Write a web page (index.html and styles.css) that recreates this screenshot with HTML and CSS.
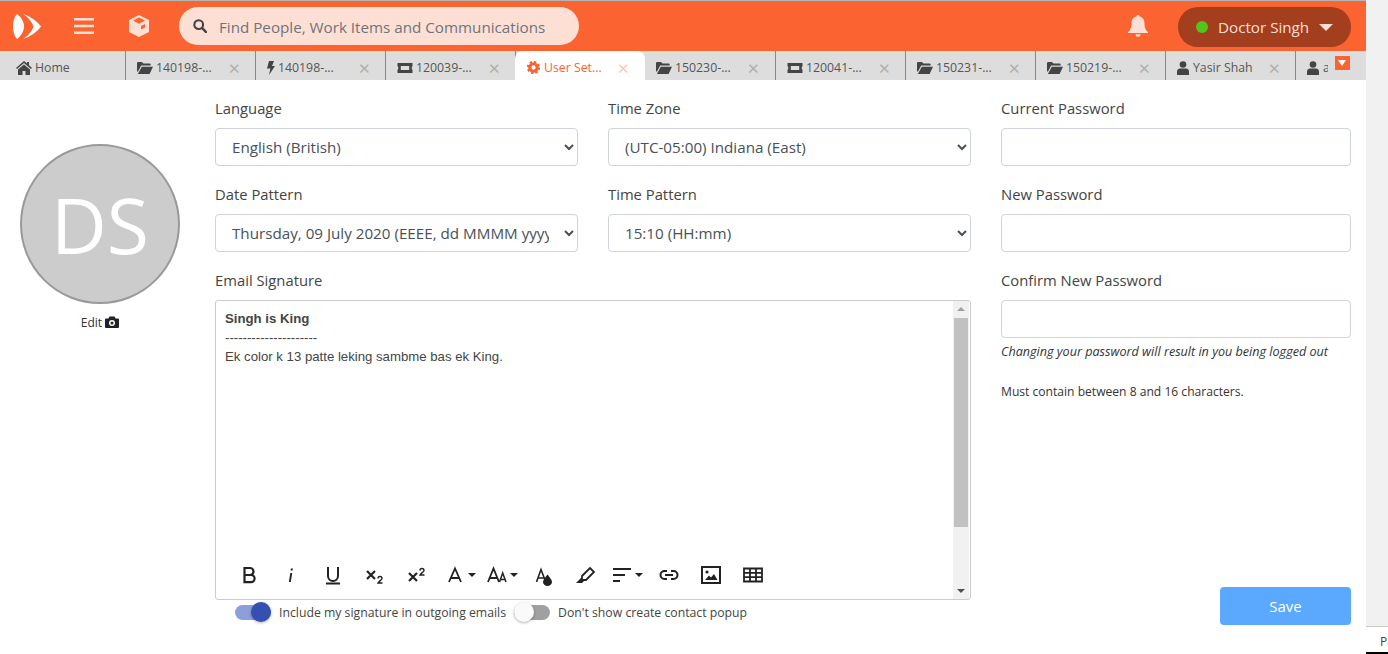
FILE: index.html
```html
<!DOCTYPE html>
<html lang="en">
<head>
    <meta charset="UTF-8">
    <title>User Settings</title>
    <link rel="stylesheet" href="styles.css">
</head>
<body>
<div class="page">
    <div class="main">
        <header class="topbar">
            <svg class="logo" viewBox="0 0 30 27" width="30" height="27"><path fill="#fff" d="M5 1C9 4 12 9 12 13.5C12 18 9 23 5 26C2 23 1 18 1 13.5C1 9 2 4 5 1Z"/><path fill="#fff" d="M11 1C18 3 25 8 29 13.5C25 19 18 24 11 26C16 23 20 18 21.5 13.5C20 9 16 4 11 1Z"/></svg>
            <svg class="burger" viewBox="0 0 20 16" width="20" height="16"><path fill="#fedfd4" d="M0 0h20v2.6H0zM0 6.7h20v2.6H0zM0 13.4h20V16H0z"/></svg>
            <svg class="cube" viewBox="0 0 22 22" width="22" height="22"><path fill="#fedfd4" d="M11 0L21 5V17L11 22L1 17V5ZM11 2.6L5 5.6L11 8.7L17 5.6ZM13 11V14.5L17 12.5V9Z" fill-rule="evenodd"/></svg>
            <div class="search">
                <svg viewBox="0 0 16 16" width="14" height="14"><circle cx="6.5" cy="6.5" r="5" fill="none" stroke="#444" stroke-width="2.4"/><path d="M10.5 10.5L15 15" stroke="#444" stroke-width="2.8" stroke-linecap="round"/></svg>
                <span>Find People, Work Items and Communications</span>
            </div>
            <svg class="bell" viewBox="0 0 20 22" width="20" height="22"><path fill="#fedfd4" d="M10 0a1.5 1.5 0 0 1 1.5 1.6C15 2.3 16.5 5 16.5 8.5C16.5 13 17.5 14.8 20 17V18H0V17C2.5 14.8 3.5 13 3.5 8.5C3.5 5 5 2.3 8.5 1.6A1.5 1.5 0 0 1 10 0ZM7.5 19.2h5a2.5 2.5 0 0 1-5 0Z"/></svg>
            <div class="user">
                <span class="dot"></span>
                <span class="user-name">Doctor Singh</span>
                <span class="caret"></span>
            </div>
        </header>

        <nav class="tabs">
            <div class="tab tab-home">
                <svg class="ico" viewBox="0 0 16 14" width="16" height="14"><path fill="#444" d="M8 0L11 2.6V1H13V4.3L16 7L15 8L8 2L1 8L0 7ZM8 3.5L14 8.6V14H9.5V10H6.5V14H2V8.6Z"/></svg>
                <span>Home</span>
            </div>
            <div class="tab">
                <svg class="ico" viewBox="0 0 16 12" width="16" height="12"><use href="#folder"/></svg>
                <span>140198-...</span><i class="x">✕</i>
            </div>
            <div class="tab">
                <svg class="ico ico-s" viewBox="0 0 8 14" width="8" height="14"><path fill="#444" d="M2 0H7L5 5H8L2 14L3.4 7.5H0Z"/></svg>
                <span>140198-...</span><i class="x">✕</i>
            </div>
            <div class="tab">
                <svg class="ico" viewBox="0 0 16 12" width="16" height="12"><use href="#ticket"/></svg>
                <span>120039-...</span><i class="x">✕</i>
            </div>
            <div class="tab tab-active">
                <svg class="ico ico-g" viewBox="0 0 14 14" width="13" height="13"><circle cx="7" cy="7" r="4" fill="none" stroke="#fb6330" stroke-width="3.4"/><circle cx="7" cy="7" r="6" fill="none" stroke="#fb6330" stroke-width="2.4" stroke-dasharray="2.4 2.3"/></svg>
                <span>User Set...</span><i class="x">✕</i>
            </div>
            <div class="tab">
                <svg class="ico" viewBox="0 0 16 12" width="16" height="12"><use href="#folder"/></svg>
                <span>150230-...</span><i class="x">✕</i>
            </div>
            <div class="tab">
                <svg class="ico" viewBox="0 0 16 12" width="16" height="12"><use href="#ticket"/></svg>
                <span>120041-...</span><i class="x">✕</i>
            </div>
            <div class="tab">
                <svg class="ico" viewBox="0 0 16 12" width="16" height="12"><use href="#folder"/></svg>
                <span>150231-...</span><i class="x">✕</i>
            </div>
            <div class="tab">
                <svg class="ico" viewBox="0 0 16 12" width="16" height="12"><use href="#folder"/></svg>
                <span>150219-...</span><i class="x">✕</i>
            </div>
            <div class="tab">
                <svg class="ico ico-p" viewBox="0 0 12 14" width="12" height="14"><use href="#person"/></svg>
                <span>Yasir Shah</span><i class="x">✕</i>
            </div>
            <div class="tab tab-last">
                <svg class="ico ico-p" viewBox="0 0 12 14" width="12" height="14"><use href="#person"/></svg>
                <span class="tab-cut">a</span>
            </div>
            <div class="tab-more"></div>
        </nav>

        <form class="settings">
            <div class="col-avatar">
                <div class="avatar">DS</div>
                <div class="avatar-edit">Edit
                    <svg viewBox="0 0 14 12" width="14" height="12"><path fill="#222" fill-rule="evenodd" d="M4.5 0.5H9.5L10.5 2.5H13A1 1 0 0 1 14 3.5V11A1 1 0 0 1 13 12H1A1 1 0 0 1 0 11V3.5A1 1 0 0 1 1 2.5H3.5ZM7 4A3 3 0 1 0 7 10A3 3 0 1 0 7 4ZM7 5.5A1.5 1.5 0 1 1 7 8.5A1.5 1.5 0 1 1 7 5.5Z"/></svg>
                </div>
            </div>

            <div class="col-middle">
                <div class="two-cols">
                    <div class="field">
                        <label>Language</label>
                        <select><option>English (British)</option></select>
                    </div>
                    <div class="field">
                        <label>Time Zone</label>
                        <select><option>(UTC-05:00) Indiana (East)</option></select>
                    </div>
                    <div class="field">
                        <label>Date Pattern</label>
                        <select><option>Thursday, 09 July 2020 (EEEE, dd MMMM yyyy)</option></select>
                    </div>
                    <div class="field">
                        <label>Time Pattern</label>
                        <select><option>15:10 (HH:mm)</option></select>
                    </div>
                </div>
                <label>Email Signature</label>
                <div class="editor">
                    <div class="editor-body">
                        <div class="editor-text">
                            <p><b>Singh is King</b></p>
                            <p>---------------------</p>
                            <p>Ek color k 13 patte leking sambme bas ek King.</p>
                        </div>
                        <div class="toolbar">
                            <span class="tool"><svg viewBox="0 0 24 24"><path fill="none" stroke="#222" stroke-width="2.2" d="M7.5 5H13a3.4 3.4 0 0 1 0 7H7.5ZM7.5 12H14a3.6 3.6 0 0 1 0 7.2H7.500Z"/></svg></span>
                            <span class="tool"><svg viewBox="0 0 24 24"><path fill="#222" d="M11.3 10H13.2L11.8 19H9.9ZM11.900 5.600H13.900L13.600 7.600H11.600Z"/></svg></span>
                            <span class="tool"><svg viewBox="0 0 24 24"><path fill="none" stroke="#222" stroke-width="2" d="M7 4V13a5 5 0 0 0 10 0V4M5 20.500H19"/></svg></span>
                            <span class="tool"><svg viewBox="0 0 24 24"><path fill="none" stroke="#222" stroke-width="2.200" d="M4 8L12 16M12 8L4 16"/><path fill="none" stroke="#222" stroke-width="1.400" d="M15 15.500a2 2 0 0 1 4 0c0 1.500-3 2.500-4 4.500H19.500"/></svg></span>
                            <span class="tool"><svg viewBox="0 0 24 24"><path fill="none" stroke="#222" stroke-width="2.200" d="M4 10L12 18M12 10L4 18"/><path fill="none" stroke="#222" stroke-width="1.400" d="M15 7.500a2 2 0 0 1 4 0c0 1.500-3 2.500-4 4.500H19.500"/></svg></span>
                            <span class="tool tool-a"><svg viewBox="4 0 16 24"><path fill="none" stroke="#222" stroke-width="1.800" d="M6 19L12 5.500L18 19M8 15H16"/></svg><span class="tool-caret"></span></span>
                            <span class="tool tool-aa"><svg viewBox="0 0 20 24"><path fill="none" stroke="#222" stroke-width="1.800" d="M1 19L6.500 5.500L12 19M2.800 15H10.200"/><path fill="none" stroke="#222" stroke-width="1.500" d="M12.500 19L15.700 10L19 19M13.800 16.500H17.600"/></svg><span class="tool-caret"></span></span>
                            <span class="tool"><svg viewBox="0 0 24 24"><path fill="none" stroke="#222" stroke-width="1.600" d="M5.500 19L10 6.500L14 17M7 15H13"/><path fill="#222" d="M16.500 11.500C18.500 14.500 21 16.500 21 19A4.500 4 0 0 1 12 19C12 16.500 14.500 14.500 16.500 11.500Z"/></svg></span>
                            <span class="tool"><svg viewBox="0 0 24 24"><path fill="none" stroke="#222" stroke-width="1.800" d="M9 13L17 5L21 9L13 17L9 17Z"/><path fill="#222" d="M8 15L11 18L9 20H3Z"/></svg></span>
                            <span class="tool tool-align"><svg viewBox="2 0 20 24"><path fill="none" stroke="#222" stroke-width="2" d="M3 6H21M3 12H15M3 18H10"/></svg><span class="tool-caret"></span></span>
                            <span class="tool"><svg viewBox="0 0 24 24"><path fill="none" stroke="#222" stroke-width="2" d="M10 8H7.500a4 4 0 0 0 0 8H10M14 8H16.500a4 4 0 0 1 0 8H14M8 12H16"/></svg></span>
                            <span class="tool"><svg viewBox="0 0 24 24"><path fill="none" stroke="#222" stroke-width="2" d="M3 4H21V20H3Z"/><circle cx="8" cy="9" r="1.600" fill="#222"/><path fill="#222" d="M6 17L10 12.500L12 14.500L15 11L18.500 17Z"/></svg></span>
                            <span class="tool"><svg viewBox="0 0 24 24"><path fill="none" stroke="#222" stroke-width="1.800" d="M3 5.500H21V18.500H3ZM3 9.800H21M3 14.200H21M9 5.500V18.500M15 5.500V18.500"/></svg></span>
                        </div>
                    </div>
                    <div class="scroll">
                        <span class="scroll-up"></span>
                        <span class="scroll-thumb"></span>
                        <span class="scroll-down"></span>
                    </div>
                </div>
                <div class="toggles">
                    <span class="toggle toggle-on"><span class="knob"></span></span>
                    <span class="toggle-label">Include my signature in outgoing emails</span>
                    <span class="toggle"><span class="knob"></span></span>
                    <span class="toggle-label">Don't show create contact popup</span>
                </div>
            </div>

            <div class="col-password">
                <div class="field">
                    <label>Current Password</label>
                    <input type="password">
                </div>
                <div class="field">
                    <label>New Password</label>
                    <input type="password">
                </div>
                <label>Confirm New Password</label>
                <input type="password">
                <p class="note"><em>Changing your password will result in you being logged out</em></p>
                <p class="note note-rule">Must contain between 8 and 16 characters.</p>
                <button type="button" class="save">Save</button>
            </div>
        </form>
    </div>

    <aside class="side">
        <div class="side-gutter"></div>
        <div class="side-label">Pa</div>
        <div class="side-end"></div>
    </aside>
</div>

<svg class="defs" width="0" height="0">
    <symbol id="folder" viewBox="0 0 16 12"><path fill="#444" d="M0 1.200A1.200 1.200 0 0 1 1.200 0H5L6.500 1.500H12.500A1.200 1.200 0 0 1 13.700 2.700V3.600H4.200L1 9.500H0ZM4.800 4.800H16L12.600 12H0.900Z"/></symbol>
    <symbol id="ticket" viewBox="0 0 16 12"><path fill="#444" fill-rule="evenodd" d="M0.500 1H15.500V4.500H14.800V7.500H15.500V11H0.500V7.500H1.200V4.500H0.500ZM3.800 4V8H12.200V4Z"/></symbol>
    <symbol id="person" viewBox="0 0 12 14"><circle cx="6" cy="3.500" r="3.300" fill="#444"/><path fill="#444" d="M0 14V10.500C0 8.500 1.500 7.500 3 7.500H9C10.500 7.500 12 8.500 12 10.500V14Z"/></symbol>
</svg>
</body>
</html>
```

FILE: styles.css
```css
* {
    box-sizing: border-box;
}
html, body {
    margin: 0;
    height: 654px;
    overflow: hidden;
}
body {
    font-family: "Open Sans", "Noto Sans", sans-serif;
    color: #444;
    background: #fff;
}
.defs {
    display: none;
}
.page {
    display: flex;
    height: 654px;
}
.main {
    width: 1366px;
    flex: none;
}

/* top bar */
.topbar {
    height: 51px;
    border-top: 1px solid #b5b5b5;
    background-color: #fb6330;
    display: flex;
    align-items: center;
}
.logo {
    margin-left: 12px;
}
.burger {
    margin-left: 32px;
}
.cube {
    margin-left: 34px;
}
.search {
    margin-left: 29px;
    width: 400px;
    height: 38px;
    border-radius: 19px;
    background-color: #fedfd4;
    display: flex;
    align-items: center;
    padding-left: 14px;
    gap: 12px;
    font-size: 15.2px;
    color: #6c757d;
}
.search span {
    padding-top: 2px;
}
.bell {
    margin-left: auto;
}
.user {
    margin-left: 30px;
    margin-right: 15px;
    margin-top: 2px;
    width: 173px;
    height: 40px;
    border-radius: 20px;
    background-color: #a33e1e;
    display: flex;
    align-items: center;
    padding-left: 18px;
    color: #fedfd4;
    font-size: 15.2px;
}
.dot {
    width: 12px;
    height: 12px;
    border-radius: 50%;
    background-color: #52c41a;
    margin-right: 10px;
}
.caret {
    margin-left: 10px;
    border-left: 7px solid transparent;
    border-right: 7px solid transparent;
    border-top: 7px solid #fedfd4;
}

/* tabs */
.tabs {
    height: 29px;
    background-color: #ddd;
    display: flex;
    position: relative;
    overflow: hidden;
    font-size: 12.3px;
    color: #555;
}
.tab {
    width: 130px;
    flex: none;
    display: flex;
    align-items: center;
    padding-left: 11px;
    padding-top: 4px;
    border-right: 1px solid #888;
    position: relative;
}
.tab-home {
    width: 126px;
    padding-left: 16px;
}
.tab-active {
    background-color: #fff;
    color: #fb6330;
    border-right: none;
    border-radius: 8px 8px 0 0;
    margin-left: -1px;
    padding-left: 12px;
}
.tab-active + .tab {
    width: 131px;
}
.tab-last {
    border-right: none;
    width: 70px;
}
.tab-cut {
    width: 5px;
    overflow: hidden;
}
.ico {
    margin-right: 3px;
    flex: none;
}
.ico-g {
    margin-right: 4px;
}
.ico-p {
    margin-right: 4px;
}
.x {
    position: absolute;
    left: 102px;
    font-style: normal;
    font-size: 15px;
    color: #b0b0b0;
}
.tab-active .x {
    color: #fdc9b6;
}
.tab-more {
    position: absolute;
    left: 1335px;
    top: 5px;
    width: 15px;
    height: 14px;
    background-color: #fb6330;
}
.tab-more::after {
    content: "";
    position: absolute;
    left: 3px;
    top: 4px;
    border-left: 4.5px solid transparent;
    border-right: 4.5px solid transparent;
    border-top: 6px solid #fff;
}

/* settings form */
.settings {
    height: 545px;
    display: flex;
    padding-top: 16px;
}
.col-avatar {
    width: 215px;
    flex: none;
    padding-left: 20px;
    padding-top: 48px;
}
.avatar {
    width: 160px;
    height: 160px;
    border-radius: 50%;
    border: 2px solid #999;
    background-color: #ccc;
    color: #fff;
    font-size: 77px;
    display: flex;
    align-items: center;
    justify-content: center;
}
.avatar-edit {
    width: 160px;
    margin-top: 10px;
    text-align: center;
    font-size: 12px;
    color: #333;
    line-height: 18px;
}
.avatar-edit svg {
    vertical-align: -1px;
}
.col-middle {
    width: 756px;
    flex: none;
}
.two-cols {
    display: grid;
    grid-template-columns: 363px 363px;
    column-gap: 30px;
}
.col-password {
    width: 350px;
    flex: none;
    margin-left: 30px;
    display: flex;
    flex-direction: column;
}
.field {
    margin-bottom: 16px;
}
label {
    display: block;
    font-size: 14.8px;
    line-height: 24px;
    margin-bottom: 8px;
    color: #444;
}
select, input {
    display: block;
    width: 100%;
    height: 38px;
    flex: none;
    border: 1px solid #ced4da;
    border-radius: 4px;
    background-color: #fff;
    padding: 6px 12px;
    font-family: inherit;
    font-size: 15.2px;
    color: #495057;
}
.note {
    margin: 5px 0 0;
    font-size: 12.1px;
    line-height: 18px;
    color: #333;
}
.note em {
    font-size: 12.6px;
}
.note-rule {
    margin-top: 22px;
}
.save {
    margin-top: auto;
    align-self: flex-end;
    width: 131px;
    height: 38px;
    border: none;
    border-radius: 4px;
    background-color: #5aa9ff;
    color: #fff;
    font-family: inherit;
    font-size: 15px;
}

/* signature editor */
.editor {
    height: 300px;
    border: 1px solid #ccc;
    border-radius: 3px;
    display: flex;
}
.editor-body {
    flex: 1;
    display: flex;
    flex-direction: column;
}
.editor-text {
    flex: 1;
    padding: 8px 9px 0;
    font-family: "Liberation Sans", Arial, sans-serif;
    font-size: 13.2px;
    color: #444;
}
.editor-text p {
    margin: 0;
    line-height: 19px;
}
.toolbar {
    height: 48px;
    display: flex;
    align-items: center;
    padding-left: 12px;
}
.tool {
    width: 42px;
    height: 24px;
    flex: none;
    display: flex;
    align-items: center;
    justify-content: center;
}
.tool svg {
    width: 24px;
    height: 24px;
    flex: none;
}
.tool-a, .tool-aa {
    justify-content: flex-start;
}
.tool-a {
    padding-left: 9px;
}
.tool-a svg {
    width: 16px;
}
.tool-a .tool-caret {
    margin-left: 5px;
}
.tool-aa {
    padding-left: 7px;
}
.tool-aa svg {
    width: 20px;
}
.tool-align svg {
    width: 20px;
}
.tool-caret {
    margin-left: 3px;
    flex: none;
    border-left: 4px solid transparent;
    border-right: 4px solid transparent;
    border-top: 4px solid #222;
}
.scroll {
    width: 16px;
    margin-right: 1px;
    background-color: #f1f1f1;
    display: flex;
    flex-direction: column;
    align-items: center;
}
.scroll-up {
    margin-top: 6px;
    border-left: 4px solid transparent;
    border-right: 4px solid transparent;
    border-bottom: 4px solid #a0a0a0;
}
.scroll-thumb {
    margin-top: 7px;
    width: 14px;
    height: 209px;
    background-color: #c1c1c1;
}
.scroll-down {
    margin-top: auto;
    margin-bottom: 6px;
    border-left: 4px solid transparent;
    border-right: 4px solid transparent;
    border-top: 4px solid #505050;
}
.toggles {
    display: flex;
    align-items: center;
    padding-left: 20px;
    height: 25px;
    font-size: 12.25px;
    color: #444;
}
.toggle {
    width: 36px;
    height: 15px;
    border-radius: 8px;
    background-color: #a0a0a0;
    position: relative;
    flex: none;
}
.knob {
    position: absolute;
    left: 0;
    top: -3px;
    width: 20px;
    height: 20px;
    border-radius: 50%;
    background-color: #fafafa;
    box-shadow: 0 1px 3px rgba(0, 0, 0, 0.3);
}
.toggle-on {
    background-color: #8c9fdb;
}
.toggle-on .knob {
    left: 16px;
    background-color: #3451b2;
}
.toggle-label {
    margin: 0 8px;
}

/* window edge on the right */
.side {
    flex: 1;
    display: flex;
    flex-direction: column;
}
.side-gutter {
    height: 627px;
    background-color: #f1f1f1;
    border-bottom: 1px solid #ccc;
}
.side-label {
    flex: 1;
    padding-left: 14px;
    padding-top: 6px;
    font-size: 12px;
    line-height: 18px;
    color: #444;
    overflow: hidden;
    white-space: nowrap;
}
.side-end {
    height: 2px;
    background-color: #000;
}
```
